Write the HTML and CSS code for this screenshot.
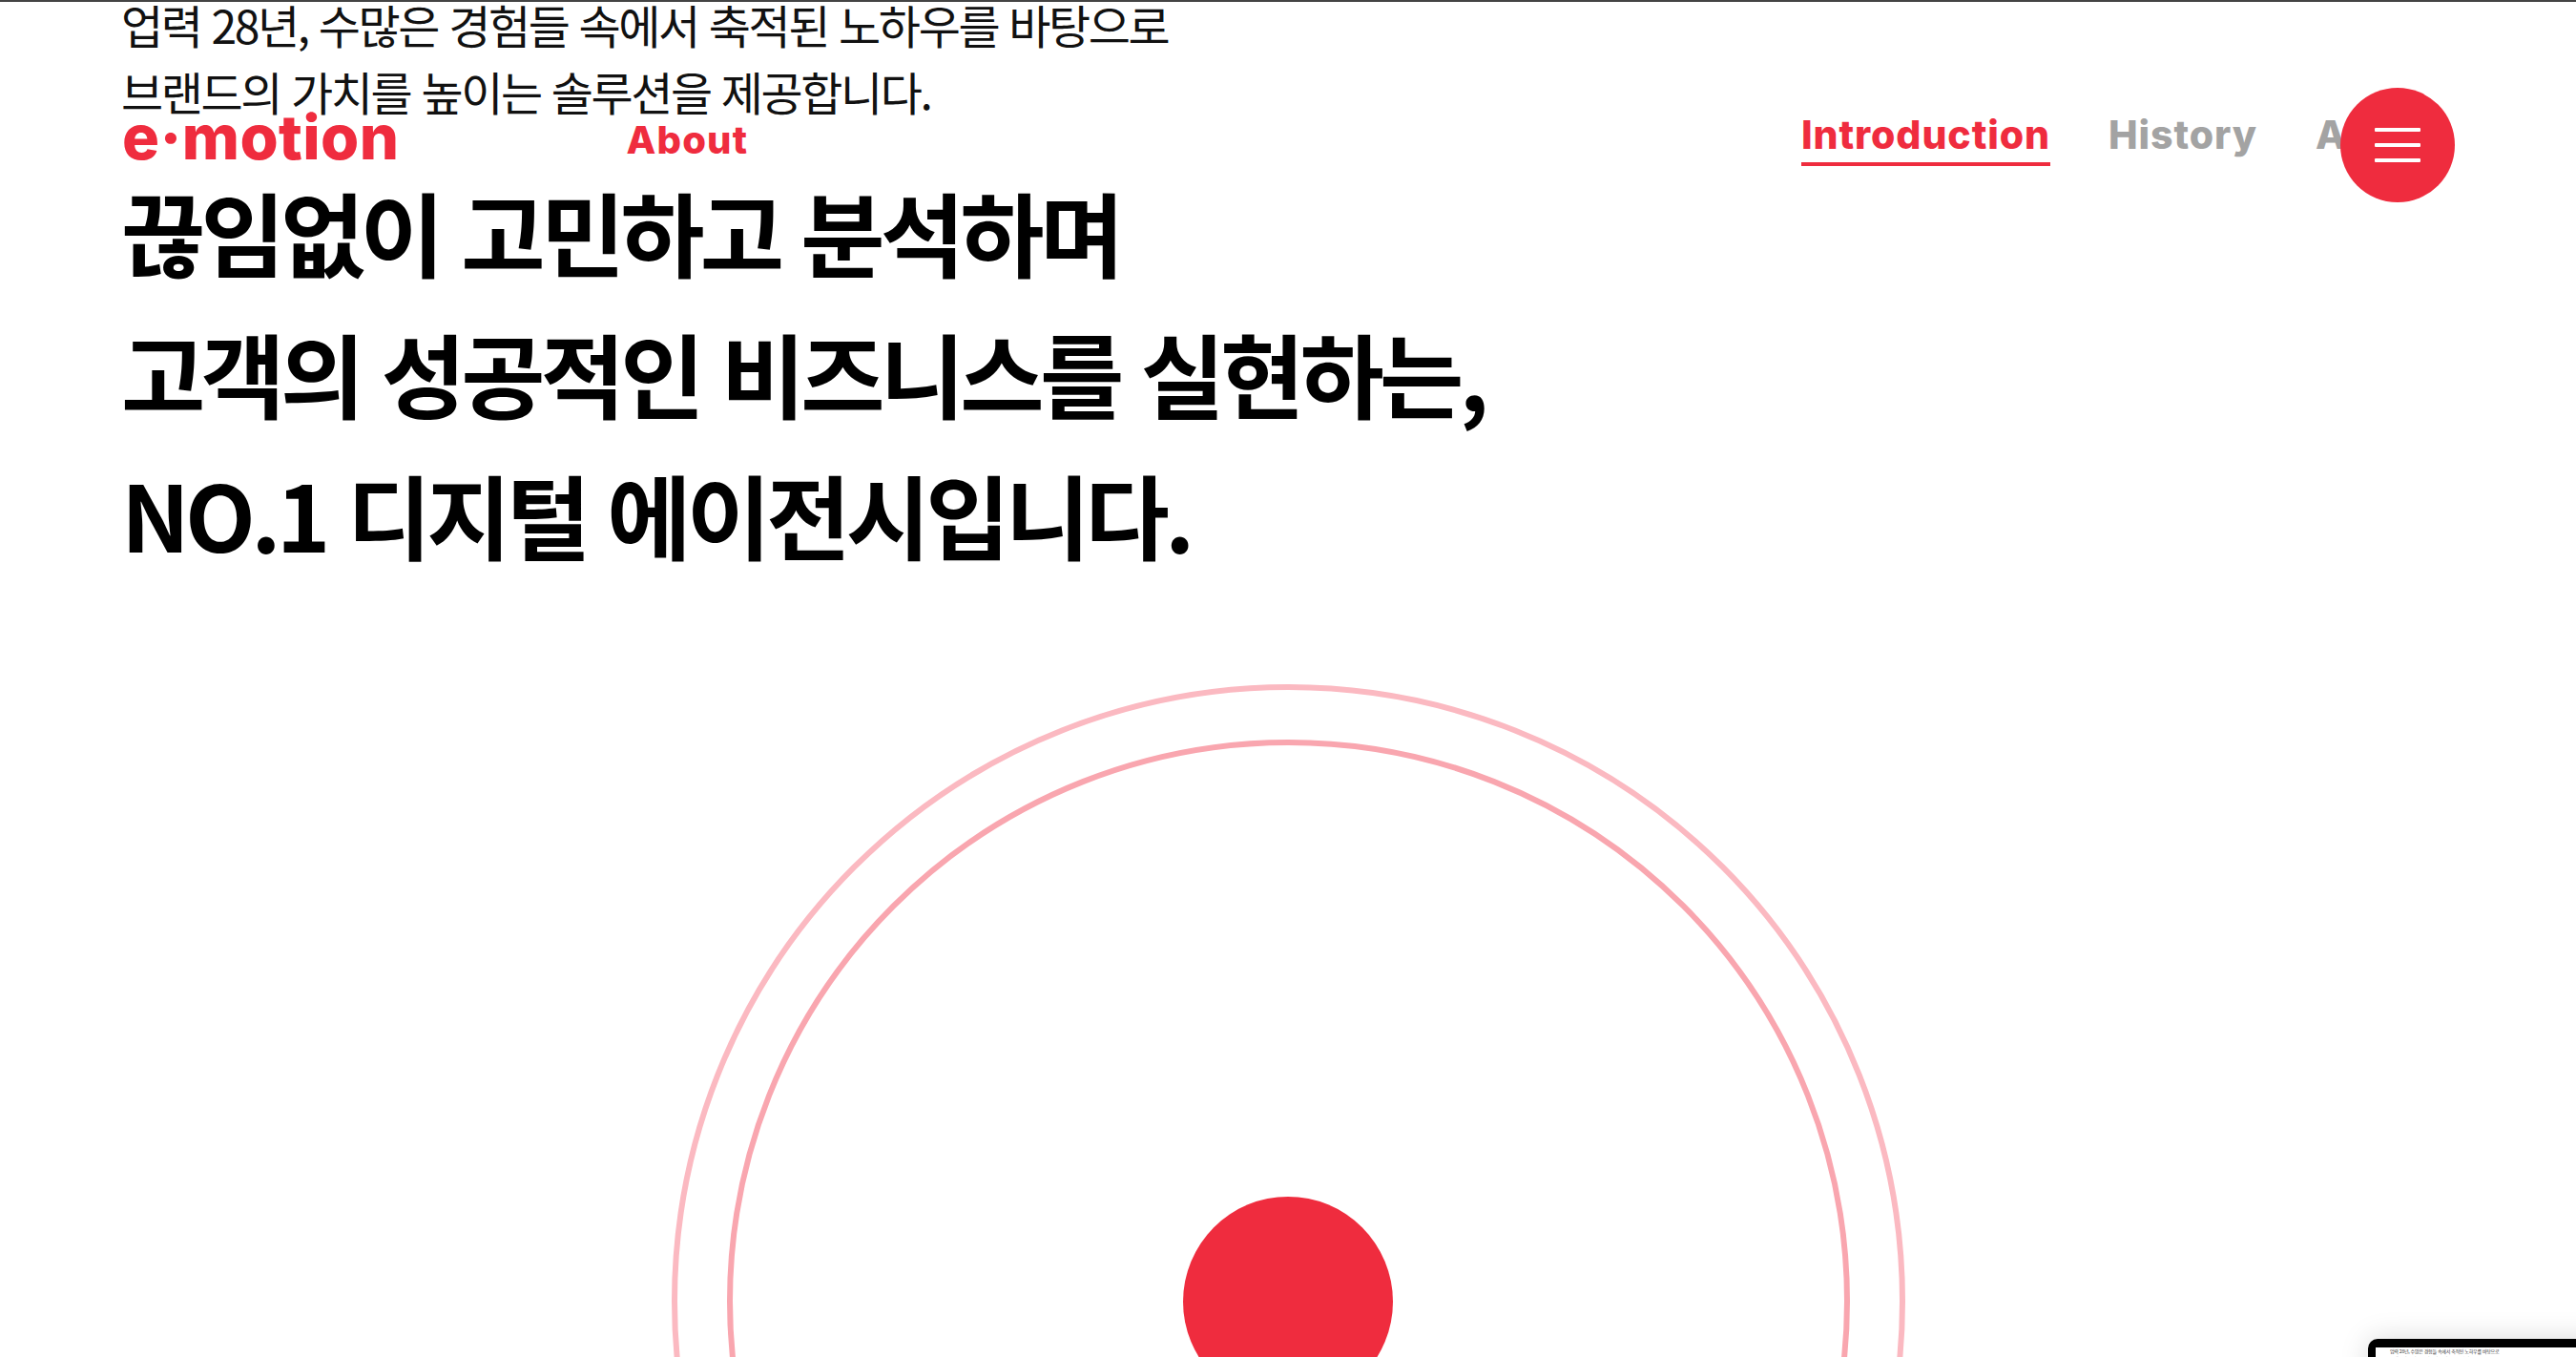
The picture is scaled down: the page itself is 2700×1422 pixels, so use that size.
FILE: index.html
```html
<!DOCTYPE html>
<html lang="ko">
<head>
    <meta charset="UTF-8">
    <title>e·motion About</title>
    <link rel="stylesheet" href="styles.css">
</head>
<body>

    <header class="site-header">
        <a class="logo">e·motion</a>
        <a class="section-name">About</a>
        <nav class="sub-nav">
            <a class="active">Introduction</a>
            <a>History</a>
            <a>Awards</a>
        </nav>
        <button class="menu-btn">
            <span></span>
            <span></span>
            <span></span>
        </button>
    </header>

    <main class="intro">
        <p class="lead">업력 28년, 수많은 경험들 속에서 축적된 노하우를 바탕으로<br>브랜드의 가치를 높이는 솔루션을 제공합니다.</p>
        <h1 class="headline">끊임없이 고민하고 분석하며<br>고객의 성공적인 비즈니스를 실현하는,<br>NO.1 디지털 에이전시입니다.</h1>

        <div class="rings">
            <div class="ring-outer">
                <div class="ring-inner">
                    <div class="dot"></div>
                </div>
            </div>
        </div>
    </main>

    <div class="preview">
        <div class="preview-screen">
            <p>업력 28년, 수많은 경험들 속에서 축적된 노하우를 바탕으로</p>
            <p>브랜드의 가치를 높이는 솔루션을 제공합니다.</p>
        </div>
    </div>

</body>
</html>
```

FILE: styles.css
```css
html, body {
    height: 100%;
}
body {
    position: relative;
    height: 1422px;
    margin: 0;
    overflow: hidden;
    background-color: #fff;
    border-top: 2px solid #444;
    box-sizing: border-box;
    color: #000;
    font-family: "Noto Sans CJK KR", "Noto Sans", sans-serif;
}

/* header sits over the text */
.site-header {
    position: absolute;
    top: 90px;
    left: 128px;
    right: 127px;
    height: 120px;
    display: flex;
    align-items: flex-start;
    font-family: Inter, "Noto Sans", sans-serif;
    font-weight: 800;
    color: #ef2c3e;
}
.logo {
    margin-top: 14px;
    font-size: 65px;
    font-weight: 800;
    line-height: 76px;
    letter-spacing: 0.4px;
}
.section-name {
    margin-left: 238px;
    margin-top: 32px;
    font-size: 40px;
    line-height: 46px;
    letter-spacing: 1.2px;
}
.sub-nav {
    display: flex;
    gap: 61px;
    width: 592px;
    margin-left: auto;
    margin-right: 93px;
    margin-top: 21px;
    overflow: hidden;
    white-space: nowrap;
    font-size: 41px;
    line-height: 56px;
    letter-spacing: 0.9px;
    color: #a3a3a3;
}
.sub-nav a {
    height: 61px;
    box-sizing: border-box;
}
.sub-nav .active {
    color: #ef2c3e;
    border-bottom: 4px solid #ef2c3e;
}
.menu-btn {
    position: absolute;
    top: 0;
    right: 0;
    display: flex;
    flex-direction: column;
    justify-content: center;
    align-items: center;
    gap: 12px;
    width: 120px;
    height: 120px;
    padding: 0;
    border: none;
    border-radius: 50%;
    background-color: #ef2c3e;
}
.menu-btn span {
    width: 48px;
    height: 4px;
    border-radius: 1px;
    background-color: #fff;
}

.intro {
    padding-left: 127px;
}
.lead {
    margin: -12px 0 0;
    font-size: 48px;
    font-weight: 400;
    line-height: 70px;
    letter-spacing: -2.4px;
    color: #111;
}
.headline {
    margin: 0;
    margin-top: 38px;
    font-size: 96px;
    font-weight: 700;
    line-height: 148px;
    letter-spacing: -4.8px;
}

.rings {
    display: flex;
    justify-content: center;
    margin-left: -127px;
    margin-top: 105px;
}
.ring-outer {
    flex: none;
    display: flex;
    justify-content: center;
    align-items: center;
    width: 1293px;
    height: 1293px;
    box-sizing: border-box;
    border: 6px solid #fbb9c1;
    border-radius: 50%;
}
.ring-inner {
    display: flex;
    justify-content: center;
    align-items: center;
    width: 1177px;
    height: 1177px;
    box-sizing: border-box;
    border: 6px solid #f9a6af;
    border-radius: 50%;
}
.dot {
    width: 220px;
    height: 220px;
    border-radius: 50%;
    background-color: #ef2c3e;
}

/* small laptop thumbnail in the corner */
.preview {
    position: absolute;
    top: 1401px;
    left: 2482px;
    width: 300px;
    height: 120px;
    box-sizing: border-box;
    padding: 9px 8px;
    border-radius: 10px;
    background-color: #000;
    box-shadow: 0 0 30px rgba(0, 0, 0, 0.15);
}
.preview-screen {
    height: 100%;
    padding-left: 15px;
    background-color: #fff;
    font-size: 5px;
    line-height: 7.5px;
    letter-spacing: -0.25px;
    color: #333;
}
.preview-screen p {
    margin: 0;
}
```
